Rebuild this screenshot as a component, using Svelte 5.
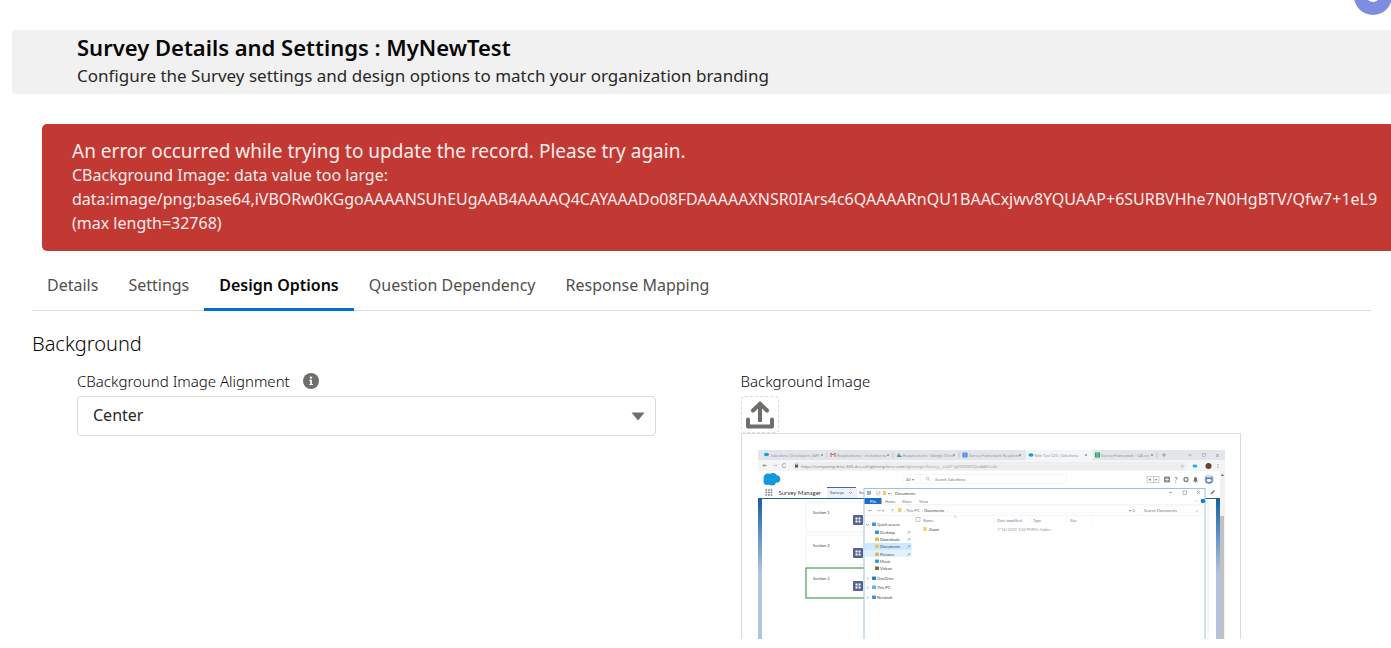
<script>
  const tabs = ['Details', 'Settings', 'Design Options', 'Question Dependency', 'Response Mapping'];
  let active = $state('Design Options');
  let alignment = $state('Center');

  const browserTabs = [
    { x: 13, label: 'Salesforce Developers | API', close: 64 },
    { x: 79, label: 'Requirements - Invitation to', close: 130 },
    { x: 145, label: 'Requirements - Google Drive', close: 196 },
    { x: 211, label: 'Survey Framework Requirem', close: 262 },
    { x: 277, label: 'Edit Test 123 | Salesforce', close: 328 },
    { x: 343, label: 'Survey Framework - QA rev', close: 394 }
  ];
  const sections = [
    { y: 52, label: 'Section 1' },
    { y: 85, label: 'Section 2' },
    { y: 118, label: 'Section 3' }
  ];
  const places = [
    { x: 119, y: 76, label: 'Quick access', color: '#2f9be8' },
    { x: 122, y: 84, label: 'Desktop', color: '#1f9ade' },
    { x: 122, y: 91, label: 'Downloads', color: '#e9b83d' },
    { x: 122, y: 98, label: 'Documents', color: '#e9c65d' },
    { x: 122, y: 106, label: 'Pictures', color: '#d8b95c' },
    { x: 122, y: 113, label: 'Music', color: '#29a4de' },
    { x: 122, y: 120, label: 'Videos', color: '#77654f' },
    { x: 119, y: 130, label: 'OneDrive', color: '#1681d2' },
    { x: 119, y: 139, label: 'This PC', color: '#56b3e4' },
    { x: 119, y: 149, label: 'Network', color: '#3a94cf' }
  ];
</script>

<div class="page">
  <div class="topbar">
    <svg width="37" height="15" viewBox="0 23 37 15" aria-hidden="true">
      <circle cx="19" cy="19" r="19" fill="#7f8de1" />
      <path d="M13 20a6 5 0 0 0 12 0" fill="#fff" />
    </svg>
  </div>

  <header class="banner">
    <h1>Survey Details and Settings : MyNewTest</h1>
    <p>Configure the Survey settings and design options to match your organization branding</p>
  </header>

  <div class="alert" role="alert">
    <h2>An error occurred while trying to update the record. Please try again.</h2>
    <p>
      CBackground Image: data value too large:<br />
      data:image/png;base64,iVBORw0KGgoAAAANSUhEUgAAB4AAAAQ4CAYAAADo08FDAAAAAXNSR0IArs4c6QAAAARnQU1BAACxjwv8YQUAAP+6SURBVHhe7N0HgBTV/Qfw7+1eL9<br />
      (max length=32768)
    </p>
  </div>

  <main>
    <div class="tabs" role="tablist">
      {#each tabs as tab}
        <button role="tab" aria-selected={active === tab} class:active={active === tab} onclick={() => (active = tab)}>{tab}</button>
      {/each}
    </div>

    <h3>Background</h3>

    <div class="fields">
      <div class="field">
        <div class="label-row">
          <label for="alignment">CBackground Image Alignment</label>
          <svg width="16" height="16" viewBox="0 0 16 16" aria-hidden="true">
            <circle cx="8" cy="8" r="8" fill="#706e6b" />
            <circle cx="8" cy="4.6" r="1.2" fill="#fff" />
            <path d="M6.2 6.8h2.7v4.1h1v1.2H6.2v-1.2h1V8h-1z" fill="#fff" />
          </svg>
        </div>
        <div class="select">
          <select id="alignment" bind:value={alignment}>
            <option>Center</option>
            <option>Left</option>
            <option>Right</option>
          </select>
          <svg width="14" height="9" viewBox="0 0 14 9" aria-hidden="true"><path d="M.5.5h13L7 8.5z" fill="#706e6b" /></svg>
        </div>
      </div>

      <div class="field">
        <div class="label-row"><span>Background Image</span></div>
        <button class="upload" aria-label="Upload">
          <svg width="30" height="30" viewBox="0 0 30 30" fill="none" stroke="#706e6b" stroke-width="4">
            <path d="M15 22V5" />
            <path d="M8 10.500 15 3.800 22 10.500" stroke-linecap="round" />
            <path d="M3 19.500V26.500H27V19.500" stroke-linecap="round" stroke-linejoin="round" />
          </svg>
        </button>
        <div class="preview">
          <svg class="shot" viewBox="0 0 467 263" role="img">
            <defs>
              <linearGradient id="sky" x1="0" y1="0" x2="0" y2="1">
                <stop offset="0" stop-color="#195f9f" />
                <stop offset="0.2" stop-color="#6c9aca" />
                <stop offset="0.35" stop-color="#b0c4df" />
              </linearGradient>
            </defs>
            <rect width="467" height="10" fill="#e2e5e9" />
            <rect x="268" width="67" height="10" fill="#f3f5f6" />
            <rect y="10" width="467" height="11" fill="#f4f5f6" />
            <rect x="34" y="12" width="395" height="8" rx="4" fill="#eceef0" />
            {#each browserTabs as t}
              <text x={t.x} y="6.500" class="tiny faint">{t.label}</text>
              <path d="M{t.close - 1} 4l2 2m0-2l-2 2" stroke="#777" stroke-width=".6" />
              {#if t.x !== 211 && t.x !== 277}
                <path d="M{t.close + 5} 2v6" stroke="#b5b8bc" stroke-width=".6" />
              {/if}
            {/each}
            <ellipse cx="8.500" cy="4.500" rx="2.600" ry="1.800" fill="#159fdb" />
            <path d="M73 7V3l2 2 2-2v4" fill="none" stroke="#df5050" stroke-width="1" />
            <path d="M138.500 7l2.500-4 1 2z" fill="#299b5b" /><path d="M141 3l3 4h-2z" fill="#f3c437" /><path d="M139 7h5l-1-1.500h-3z" fill="#4285f4" />
            <rect x="204.500" y="2.500" width="5" height="5" rx=".6" fill="#4788ee" /><path d="M206 4h2m-2 2h2" stroke="#fff" stroke-width=".5" />
            <ellipse cx="273" cy="5" rx="2.600" ry="1.800" fill="#159fdb" />
            <rect x="337" y="2.500" width="5" height="5" fill="#23a566" /><path d="M338 4h3m-3 2h3" stroke="#fff" stroke-width=".5" />
            <path d="M404 5h4m-2-2v4M430.500 5h3M458 4l3 3m0-3l-3 3" stroke="#777" stroke-width=".6" />
            <rect x="444.500" y="3.500" width="3" height="3" fill="none" stroke="#999" stroke-width=".5" />
            <path d="M9 15.500H5m1.500-1.500L5 15.500 6.500 17" fill="none" stroke="#666" stroke-width=".6" />
            <path d="M15 15.500h4m-1.500-1.500l1.500 1.500-1.500 1.500" fill="none" stroke="#bbb" stroke-width=".6" />
            <path d="M28 14.500a2 2 0 1 0 0 2" fill="none" stroke="#777" stroke-width=".6" />
            <rect x="37" y="15" width="3" height="2.500" fill="#555" /><path d="M37.500 15v-1h2v1" fill="none" stroke="#555" stroke-width=".5" />
            <text x="43" y="17.500" class="url">https://computing-drive-603-dev-ed.lightning.force.com<tspan class="faint">/lightning/r/Survey__c/a071g00000KYQxxAAG/edit</tspan></text>
            <text x="422" y="18" class="small">☆</text>
            <ellipse cx="437" cy="16" rx="2.500" ry="1.600" fill="#20aeea" />
            <circle cx="450.500" cy="16" r="3" fill="#6b3d36" />
            <path d="M460 14v4" stroke="#777" stroke-width=".8" stroke-dasharray=".8" />

            <g fill="#1599dc"><circle cx="10" cy="28" r="4.500" /><circle cx="15" cy="27" r="4" /><circle cx="18.500" cy="29" r="3.800" /><circle cx="9" cy="31.500" r="3.500" /><circle cx="14" cy="31.500" r="4" /></g>
            <rect x="144.500" y="24.500" width="164" height="9" fill="#fff" stroke="#eceef1" stroke-width=".6" />
            <path d="M162.500 24.500v9" stroke="#eceef1" stroke-width=".6" />
            <text x="148" y="31" class="tiny">All ▾</text>
            <circle cx="169.500" cy="28.500" r="1.400" fill="none" stroke="#999" stroke-width=".5" /><path d="M170.500 29.500l1.500 1.500" stroke="#999" stroke-width=".5" />
            <text x="177" y="31" class="tiny">Search Salesforce</text>
            <rect x="389" y="26.500" width="12" height="6" fill="none" stroke="#aaa" stroke-width=".6" /><path d="M395.500 26.500v6" stroke="#aaa" stroke-width=".6" />
            <text x="390" y="31" class="tiny">★</text><text x="397" y="31" class="tiny">▾</text>
            <rect x="406" y="26.500" width="6" height="6" rx="1" fill="#898989" /><path d="M409 27.500v4m-2-2h4" stroke="#fff" stroke-width=".7" />
            <text x="416" y="32.500" class="large">?</text>
            <circle cx="428" cy="29.500" r="2" fill="none" stroke="#858585" stroke-width="1.300" />
            <path d="M435 31.500h5l-1-1.500v-2q-1.500-2-3 0v2z" fill="#777" /><circle cx="437.500" cy="32" r=".7" fill="#777" />
            <circle cx="451" cy="29.500" r="5" fill="#cdddec" /><path d="M447.500 26l1.500 1.500h4l1.500-1.500v6q-3.500 3-7 0z" fill="#6280aa" /><ellipse cx="451" cy="30.500" rx="2.400" ry="1.400" fill="#fff" />
            <g stroke="#777" stroke-width="1.600" stroke-dasharray="1.600 1"><path d="M7.500 40h7M7.500 42.500h7M7.500 45h7" /></g>
            <text x="20.500" y="45" class="brand">Survey Manager</text>
            <rect x="69" y="37" width="30" height="11" fill="#edf1f8" /><path d="M69 37.500h29" stroke="#49669a" />
            <text x="72" y="44" class="tiny dark">Surveys</text><path d="M91 42l1.500 1.500L94 42" fill="none" stroke="#666" stroke-width=".6" />
            <text x="101" y="44" class="tiny dark">Su</text>
            <path d="M453 44l3.500-3.500" stroke="#666" stroke-width="1.200" />

            <rect y="48" width="462" height="215" fill="#fff" />
            <rect y="48" width="4" height="215" fill="url(#sky)" />
            <path d="M0 48.500h462" stroke="#205e9c" stroke-width="1.200" />
            <rect x="458" y="48" width="4" height="215" fill="url(#sky)" />
            <rect x="462" y="21" width="5" height="242" fill="#f1f1f1" /><rect x="462" y="66" width="4" height="197" fill="#c1c1c1" />
            <path d="M463 26l1.500-2 1.500 2z" fill="#666" />
            {#each sections as s, i}
              <rect x="48" y={s.y} width="64" height="30" fill="#fff" stroke={i === 2 ? '#4b9b52' : '#ececec'} stroke-width={i === 2 ? 1.2 : 0.7} />
              <text x="55" y={s.y + 12} class="tiny dark">{s.label}</text>
              <rect x="95" y={s.y + 13} width="10" height="10" rx="1" fill="#51658e" />
              <path d="M97.500 {s.y + 16.5}h5M97.500 {s.y + 19.5}h5" stroke="#fff" stroke-width="2" stroke-dasharray="2 1" />
            {/each}

            <rect x="106" y="38.500" width="341" height="225" fill="#fff" stroke="#9fc1dd" />
            <path d="M450 50v213" stroke="#eee" stroke-width="1" />
            <rect x="109" y="41" width="4" height="4" fill="#74b4d9" /><path d="M110 44h3" stroke="#f2c94c" />
            <rect x="118.500" y="41" width="3.500" height="4" fill="none" stroke="#bbb" stroke-width=".5" /><path d="M119 43l1 1 2-2" fill="none" stroke="#dd554a" stroke-width=".5" />
            <path d="M125 41h3v4h-3z" fill="#f1ce63" />
            <text x="130" y="44.500" class="tiny">▾ |</text><text x="137" y="44.500" class="tiny dark">Documents</text>
            <path d="M411 42.500h3M439 41l3 3m0-3l-3 3" stroke="#777" stroke-width=".6" /><rect x="425" y="41" width="3.500" height="3.500" fill="none" stroke="#777" stroke-width=".5" />
            <rect x="106.500" y="48" width="17" height="6" fill="#1670c4" /><text x="112" y="52.500" class="tiny white">File</text>
            <text x="127" y="52.500" class="tiny">Home</text><text x="144" y="52.500" class="tiny">Share</text><text x="161" y="52.500" class="tiny">View</text>
            <path d="M437 50.500l1 1 1-1" fill="none" stroke="#999" stroke-width=".5" /><circle cx="445" cy="51" r="2.300" fill="#1381d9" />
            <path d="M107 54.500h340M107 65.500h340" stroke="#eee" stroke-width=".6" />
            <text x="110" y="61.500" class="tiny">←</text><text x="119" y="61.500" class="tiny faint">→ ▾</text><text x="133" y="61.500" class="tiny">↑</text>
            <rect x="137" y="56" width="240" height="7" fill="none" stroke="#eee" stroke-width=".5" />
            <rect x="140" y="58" width="3.500" height="4" fill="#edd07d" />
            <text x="146" y="61.500" class="tiny">› This PC</text><text x="164" y="61.500" class="tiny dark">› Documents</text><text x="189" y="61.500" class="tiny">›</text>
            <text x="371" y="61.500" class="tiny">▾ ↻</text>
            <rect x="384" y="56" width="60" height="7" fill="none" stroke="#eee" stroke-width=".5" /><text x="386" y="61.500" class="tiny">Search Documents</text><text x="438" y="61.500" class="tiny">⌕</text>
            <rect x="158" y="67.500" width="4" height="4" fill="none" stroke="#999" stroke-width=".5" />
            <text x="165" y="71.500" class="tiny column">Name</text><path d="M196 67.500l1.500-1 1.500 1" fill="none" stroke="#999" stroke-width=".5" />
            <text x="239" y="71.500" class="tiny column">Date modified</text><text x="275" y="71.500" class="tiny column">Type</text><text x="312" y="71.500" class="tiny column">Size</text>
            <path d="M236.500 66v7M272.500 66v7M309 66v7M334 66v7" stroke="#eee" stroke-width=".5" />
            <rect x="165.500" y="77" width="3" height="4" fill="#f3ce58" /><text x="171" y="80.500" class="tiny dark">Zoom</text>
            <text x="239" y="80.500" class="tiny faint">7/16/2019 2:02 PM</text><text x="275" y="80.500" class="tiny faint">File folder</text>
            <rect x="106.500" y="93" width="47" height="7" fill="#cce8ff" /><rect x="106.500" y="100" width="47" height="7" fill="#e0f2ff" />
            {#each places as p, i}
              <rect x={p.x - 5} y={p.y - 3.5} width="4" height="3.500" rx=".7" fill={p.color} />
              <text x={p.x} y={p.y} class="tiny dark">{p.label}</text>
              {#if i > 0 && i < 5}<path d="M149.500 {p.y}l2.500-3m-1.500 0l2 2" stroke="#888" stroke-width=".6" />{/if}
              {#if i === 0}<path d="M108 {p.y - 2}l1.500 1.500 1.500-1.500" fill="none" stroke="#555" stroke-width=".5" />{/if}
              {#if i > 6}<path d="M109 {p.y - 3}l1.200 1.500-1.200 1.500" fill="none" stroke="#777" stroke-width=".5" />{/if}
            {/each}
          </svg>
        </div>
      </div>
    </div>
  </main>
</div>

<style>
  :global(body) { background: #fff; }
  .page {
    box-sizing: border-box;
    height: calc(100vh - 9px);
    overflow: hidden;
    padding-left: 12px;
    color: #080707;
    font-family: "Noto Sans", "Open Sans", sans-serif;
    font-size: 16px;
    line-height: 24px;
  }
  h1, h2, h3, p { margin: 0; font-weight: 400; }
  .topbar { height: 30px; display: flex; justify-content: flex-end; align-items: flex-start; }
  .banner { padding: 3px 65px; background: #f1f1f1; border-radius: 4px 0 0 4px; }
  .banner h1 { font-size: 22px; line-height: 28px; font-weight: 600; }
  .banner p { font-size: 17px; line-height: 30px; color: #2b2826; }
  .alert {
    margin: 30px 0 0 30px;
    padding: 15px 30px 16px;
    border-radius: 5px 0 0 5px;
    background: #c23934;
    color: #fbeceb;
    white-space: nowrap;
    overflow: hidden;
  }
  .alert h2 { font-size: 19px; line-height: 24px; }
  main { margin: 19px 20px 0; }
  .tabs { display: flex; height: 40px; border-bottom: 1px solid #dddbda; }
  .tabs button {
    height: 40px;
    box-sizing: content-box;
    padding: 0 15px 1px;
    border: 0;
    background: none;
    color: #514f4d;
    font: inherit;
    line-height: 30px;
    display: flex;
    align-items: flex-start;
    white-space: nowrap;
  }
  .tabs button.active { box-shadow: inset 0 -3px #0070d2; color: #080707; font-weight: 600; }
  h3 { margin-top: 20px; font-size: 20px; line-height: 25px; font-weight: 300; }
  .fields { display: grid; grid-template-columns: 1fr 1fr; margin-top: 12px; }
  .field { padding: 0 46px 0 45px; }
  .field + .field { padding: 0 39px; }
  .label-row { display: flex; align-items: center; gap: 13px; height: 26px; padding-bottom: 2px; font-size: 15px; font-weight: 300; color: #080707; }
  .select { display: grid; align-items: center; }
  .select > * { grid-area: 1 / 1; }
  .select svg { justify-self: end; margin-right: 11px; pointer-events: none; }
  select {
    appearance: none;
    width: 100%;
    height: 40px;
    padding: 0 15px 2px;
    border: 1px solid #dddbda;
    border-radius: 4px;
    background: #fff;
    color: #2b2826;
    font: inherit;
  }
  .upload {
    display: grid;
    place-items: center;
    width: 38px;
    height: 37px;
    padding: 0;
    border: 1px dashed #dddbda;
    border-radius: 4px;
    background: none;
  }
  .preview { box-sizing: border-box; max-width: 500px; padding: 16px 15px 16px 16px; border: 1px solid #dddbda; }
  .shot { display: block; width: 100%; font-family: Lato, "Open Sans", sans-serif; }
  .shot text { fill: #777; }
  .tiny, .url { font-size: 4px; }
  .shot .url { font-family: "Open Sans", sans-serif; }
  .small { font-size: 5px; }
  .large { font-size: 8px; }
  .shot .brand { font-size: 6px; fill: #333; }
  .shot .dark { fill: #444; }
  .shot .faint { fill: #999; }
  .shot .white { fill: #fff; }
  .shot .column { fill: #6e7f96; }
</style>
